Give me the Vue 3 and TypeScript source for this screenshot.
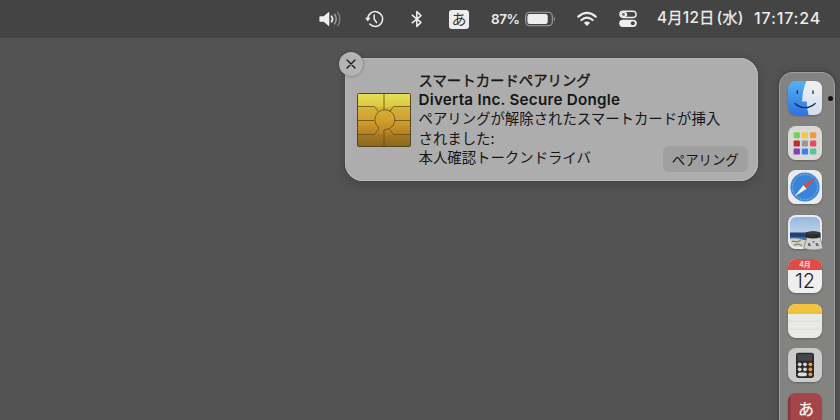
<script setup lang="ts">
const notice = {
  title: 'スマートカードペアリング',
  device: 'Diverta Inc. Secure Dongle',
  lines: ['ペアリングが解除されたスマートカードが挿入', 'されました:', '本人確認トークンドライバ'],
  action: 'ペアリング',
}

const launchpadTiles: string[] = [
  '#79cf55', '#f4c742', '#ef9b3b',
  '#c52d2b', '#96989d', '#ec4861',
  '#8340b9', '#3483e8', '#54c79a',
]
const tilePos = (i: number) => ({ x: 5.6 + (i % 3) * 8.2, y: 6.2 + Math.floor(i / 3) * 8.2 })
const dialTicks: number[] = Array.from({ length: 36 }, (_, i) => i * 10)
const keyRows: number[] = [16.3, 21.3, 26.3]
</script>

<template>
  <div class="desktop">
    <header class="menubar">
      <svg class="volume" width="24" height="18" viewBox="0 0 24 18">
        <path d="M1.2 6.3h3.5L9.4 2.2q.9-.6.9.5v12.6q0 1.1-.9.5l-4.7-4.1H1.2q-.8 0-.8-.8V7.1q0-.8.8-.8z" fill="#ededed" />
        <path d="M12.6 6.2q2 2.8 0 5.6" class="line" stroke-width="1.7" />
        <path d="M15.6 4.3q3.2 4.7 0 9.4" class="line" stroke-width="1.6" opacity=".5" />
        <path d="M18.7 2.4q4.4 6.6 0 13.2" class="line" stroke-width="1.6" opacity=".32" />
      </svg>
      <svg class="clock" width="19" height="18" viewBox="0 0 19 18">
        <path d="M2.8 9a7.4 7.4 0 1 1 2 5.1" class="line" stroke-width="1.5" />
        <path d="M0 7.8h5.5L2.8 11.5z" fill="#ededed" />
        <path d="M9.2 4.9v4.4l2.4 3.2" class="line" stroke-width="1.5" />
      </svg>
      <svg class="bluetooth" width="12" height="18" viewBox="0 0 12 18">
        <path d="M1.2 5.2l8.8 7.2-4.2 4V1.6l4.2 4-8.8 7.2" class="line" stroke-width="1.5" />
      </svg>
      <span class="input-source">あ</span>
      <span class="percent">87%</span>
      <svg class="battery" width="31" height="16" viewBox="0 0 31 16">
        <rect x=".7" y="1.2" width="26.6" height="13.6" rx="4" fill="none" stroke="#a1a1a1" stroke-width="1.1" />
        <rect x="2.4" y="2.9" width="20.3" height="10.2" rx="2.3" fill="#eee" />
        <path d="M28.8 5.6q2.6 2.4 0 4.8z" fill="#999" />
      </svg>
      <svg class="wifi" width="20" height="16" viewBox="0 0 20 16">
        <path d="M1.3 5.7q8.7-7.6 17.4 0M4.4 9q5.6-4.7 11.2 0" class="line" stroke-width="2.2" />
        <path d="M6.9 11.7q3.1-2.6 6.2 0L10 14.9z" fill="#eee" />
      </svg>
      <svg class="control" width="18" height="18" viewBox="0 0 18 18">
        <rect x=".9" y="1.3" width="16.2" height="6.2" rx="3.1" class="line" stroke-width="1.4" />
        <rect x="1.5" y="1.9" width="6.7" height="5" rx="2.5" fill="#eee" />
        <circle cx="4.5" cy="4.4" r="1.4" fill="#666" />
        <rect x=".2" y="9.7" width="17.6" height="7.3" rx="3.65" fill="#eee" />
        <circle cx="13.8" cy="13.3" r="2" fill="#444" />
      </svg>
      <span class="date">4<i>月</i>12<i>日</i><span class="paren">(</span><i>水</i><span>)</span></span>
      <span class="time">17:17:24</span>
    </header>

    <main class="stage">
      <section class="notice">
        <button class="close" aria-label="閉じる">
          <svg width="12" height="12" viewBox="0 0 12 12">
            <path d="M2 2l8 8M10 2l-8 8" stroke="#151515" stroke-width="1.3" stroke-linecap="round" />
          </svg>
        </button>
        <svg class="chip" width="54" height="54" viewBox="0 0 54 54">
          <defs>
            <linearGradient id="gold" x1="0" y1="0" x2="0" y2="1">
              <stop offset="0" stop-color="#e5df57" />
              <stop offset=".24" stop-color="#ddc842" />
              <stop offset=".27" stop-color="#d3b339" />
              <stop offset=".5" stop-color="#d0a02f" />
              <stop offset=".75" stop-color="#b88324" />
              <stop offset=".78" stop-color="#a8781f" />
              <stop offset="1" stop-color="#88681d" />
            </linearGradient>
          </defs>
          <rect x=".5" y=".5" width="53" height="53" rx="1" fill="url(#gold)" stroke="#55471b" />
          <g fill="none" stroke="#614e1c" stroke-width=".8">
            <path d="M27 1v16M1 13.5h16.5l3.7 5.2M53 13.5H36.5l-3.7 5.2M1 27.5h16M37 27.5h16M1 41.5h16.5l4-5M53 41.5H36.5l-4-5" />
            <path d="M21.5 36.5v-2.2A10 10 0 1 1 32.5 35.5L27 37v16" />
          </g>
        </svg>
        <div class="message">
          <h1>{{ notice.title }}</h1>
          <h2>{{ notice.device }}</h2>
          <p v-for="line in notice.lines" :key="line">{{ line }}</p>
        </div>
        <button class="pair">{{ notice.action }}</button>
      </section>

      <nav class="dock">
        <div class="app">
          <svg viewBox="0 0 34 34">
            <defs>
              <linearGradient id="finder" x1="0" y1="0" x2="0" y2="1">
                <stop offset="0" stop-color="#56b2ef" /><stop offset="1" stop-color="#2e73e4" />
              </linearGradient>
              <linearGradient id="face" x1="0" y1="0" x2="0" y2="1">
                <stop offset="0" stop-color="#f0f0f3" /><stop offset="1" stop-color="#d3dff0" />
              </linearGradient>
            </defs>
            <rect width="34" height="34" rx="8" fill="url(#finder)" />
            <path d="M18.5 0H26q8 0 8 8v18q0 8-8 8h-5.3q-1.9-6-1.9-13.5h-4.6Q14.5 8 18.5 0z" fill="url(#face)" />
            <path d="M9.3 9.8v2.6M25 9.8v2.6" stroke="#162c47" stroke-width="1.3" stroke-linecap="round" />
            <path d="M7 22.5q10 8.5 20.2 0" fill="none" stroke="#152a45" stroke-width="1.2" stroke-linecap="round" />
          </svg>
          <span class="running"></span>
        </div>
        <div class="app">
          <svg viewBox="0 0 34 34">
            <rect width="34" height="34" rx="8" fill="#d9d9d8" />
            <rect v-for="(c, i) in launchpadTiles" :key="i" :x="tilePos(i).x" :y="tilePos(i).y" width="6.3" height="6" rx="1.2" :fill="c" />
          </svg>
        </div>
        <div class="app">
          <svg viewBox="0 0 34 34">
            <rect width="34" height="34" rx="8" fill="#ececee" />
            <circle cx="17" cy="17" r="14.6" fill="#3a84d8" />
            <path v-for="t in dialTicks" :key="t" d="M17 3.6v1.5" :transform="`rotate(${t} 17 17)`" stroke="#a9cdf2" stroke-width=".6" />
            <path d="M27.5 7.5L15.3 15.3l3.4 3.4z" fill="#dc4740" />
            <path d="M6.5 26.5l8.8-11.2 3.4 3.4z" fill="#f2f2f2" />
          </svg>
        </div>
        <div class="app">
          <svg viewBox="0 0 34 34">
            <defs>
              <linearGradient id="sky" x1="0" y1="0" x2="0" y2="1">
                <stop offset="0" stop-color="#91b4e1" /><stop offset="1" stop-color="#bdd1e7" />
              </linearGradient>
              <clipPath id="photo"><rect x="2" y="2" width="30" height="30" rx="6" /></clipPath>
            </defs>
            <rect width="34" height="34" rx="8" fill="#ececee" />
            <g clip-path="url(#photo)">
              <path fill="url(#sky)" d="M0 0h34v18H0z" />
              <path fill="#263f78" d="M0 17.5h34V24H0z" />
              <path fill="#426f98" d="M0 22h34v3H0z" />
              <path fill="#d6d0c3" d="M0 24q8-2 16 1h18v9H0z" />
              <path d="M4 26l5 1 4-2M6 30l5-1 3 2" fill="none" stroke="#69716e" stroke-width="1" />
            </g>
            <path d="M19 22h13l3 11.4q-9 3.2-19.3 0z" fill="#cfd0cf" stroke="#747675" stroke-width=".7" />
            <path d="M17.6 18q7.5-3.4 15 0v4.2q-7.5 2.7-15 0z" fill="#292b2c" />
            <ellipse cx="25.1" cy="18" rx="7.3" ry="1.6" fill="#3a3c3d" />
            <path d="M20 28h2l1 3h-3zM24.5 26h2v1.5h-2zM27.5 28h2.3l1.2 3h-3z" fill="#6b6e6d" />
          </svg>
        </div>
        <div class="app calendar">
          <span class="month">4月</span>
          <span class="day">12</span>
        </div>
        <div class="app">
          <svg viewBox="0 0 34 34">
            <rect width="34" height="34" rx="8" fill="#e9e9e6" />
            <path d="M0 9V8q0-8 8-8h18q8 0 8 8v1z" fill="#f0c53d" />
            <path d="M0 9.3h34" stroke="#b9a265" stroke-width=".7" />
            <path d="M1 17.2h32M1 25.2h32" stroke="#d2d2d0" stroke-width=".7" />
          </svg>
        </div>
        <div class="app">
          <svg viewBox="0 0 34 34">
            <rect width="34" height="34" rx="8" fill="#cbcccc" />
            <rect x="8" y="4.7" width="18" height="25.3" rx="2.4" fill="#292a2c" />
            <rect x="9.6" y="6.3" width="14.8" height="6.5" rx="1" fill="#44474a" />
            <g v-for="(y, i) in keyRows" :key="y">
              <circle v-if="i < 2" cx="11.7" :cy="y" r="1.9" fill="#d7d8d8" />
              <circle v-if="i < 2" cx="17" :cy="y" r="1.9" fill="#d7d8d8" />
              <rect v-else x="9.8" :y="y - 1.9" width="9.1" height="3.8" rx="1.9" fill="#dedfdf" />
              <circle cx="22.4" :cy="y" r="1.9" fill="#f09a37" />
            </g>
          </svg>
        </div>
        <div class="app dictionary">あ</div>
      </nav>
    </main>
  </div>
</template>

<style>
body {
  overflow: hidden;
}
</style>

<style scoped>
.desktop {
  width: 840px;
  height: 420px;
  overflow: hidden;
  display: flex;
  flex-direction: column;
  background: #535353;
  font-family: Inter, "Noto Sans CJK JP", sans-serif;
}
.menubar {
  height: 38px;
  flex: none;
  box-sizing: border-box;
  display: flex;
  align-items: center;
  padding-left: 319px;
  background: #444;
  color: #ededed;
  white-space: nowrap;
}
.menubar > * { flex: none; }
.line {
  fill: none;
  stroke: #ededed;
  stroke-linecap: round;
  stroke-linejoin: round;
}
.clock { margin-left: 22px; }
.bluetooth { margin-left: 26.5px; }
.input-source {
  width: 20px;
  height: 19px;
  margin-left: 26.5px;
  border-radius: 3px;
  background: #ededed;
  color: #333;
  font: 400 15px/18px "Noto Sans CJK JP", sans-serif;
  text-align: center;
}
.percent {
  width: 34px;
  margin-left: 22px;
  font-size: 13.4px;
  font-weight: 600;
  letter-spacing: -0.4px;
}
.wifi { margin-left: 21px; }
.control { margin-left: 22px; }
.date {
  width: 97px;
  margin-left: 20px;
  font-size: 15.4px;
  line-height: 20px;
  font-weight: 500;
  letter-spacing: 0.3px;
}
.date i {
  font-style: normal;
  font-weight: 400;
  font-size: 15px;
  -webkit-text-stroke: 0.3px #ededed;
}
.paren { margin-left: 2px; }
.time {
  font-size: 16px;
  line-height: 20px;
  font-weight: 500;
  letter-spacing: 0.85px;
}
.date, .time {
  position: relative;
  top: -1px;
}
.stage {
  flex: 1;
  min-height: 0;
  display: flex;
  align-items: flex-start;
  padding-left: 345px;
}
button {
  border: 0;
  padding: 0;
  font-family: inherit;
}
.notice {
  position: relative;
  flex: none;
  box-sizing: border-box;
  width: 413px;
  height: 123px;
  margin-top: 20px;
  padding: 12px 9px 9px 11.5px;
  display: flex;
  border-radius: 18px;
  background: #adadad;
  box-shadow: 0 0 0 1px #484848, inset 0 0 0 1px #b9b9b9, 0 3px 12px #0003;
  color: #151515;
}
.close {
  position: absolute;
  left: -6px;
  top: -6px;
  width: 24px;
  height: 24px;
  display: grid;
  place-items: center;
  border-radius: 50%;
  background: #b4b4b4;
  box-shadow: 0 0 3px #0006;
}
.chip {
  flex: none;
  margin-top: 22.5px;
}
.message {
  flex: none;
  width: 244px;
  margin-left: 8px;
  white-space: nowrap;
}
.message > * {
  height: 19.2px;
  margin: 0;
  font-size: 14.4px;
  line-height: 19.2px;
  font-weight: 400;
}
.message p, .message h1 {
  font-family: "Noto Sans CJK JP", sans-serif;
}
.message h1 { -webkit-text-stroke: 0.35px #151515; }
.message h2 {
  font-size: 15.2px;
  font-weight: 600;
  line-height: 21px;
  letter-spacing: 0.26px;
}
.pair {
  flex: none;
  align-self: flex-end;
  width: 85.5px;
  height: 26px;
  border-radius: 6px;
  background: #a0a0a0;
  color: #151515;
  font: 400 13.4px/25px "Noto Sans CJK JP", sans-serif;
}
.dock {
  flex: none;
  box-sizing: border-box;
  width: 56px;
  height: 400px;
  margin: 34px 0 0 21px;
  padding: 8px 0 0 8px;
  display: flex;
  flex-direction: column;
  gap: 10.5px;
  border: 1px solid #a0a0a0;
  border-radius: 13px;
  background: #838482;
  box-shadow: 0 0 0 1px #444, 0 0 10px #0003;
}
.app {
  position: relative;
  flex: none;
  width: 34px;
  height: 34px;
  border-radius: 8px;
  box-shadow: 0 1px 2px #0004;
}
.app svg {
  display: block;
  width: 34px;
  height: 34px;
  overflow: visible;
}
.running {
  position: absolute;
  left: 39.5px;
  top: 14.5px;
  width: 5px;
  height: 5px;
  border-radius: 50%;
  background: #111;
}
.calendar {
  overflow: hidden;
  display: flex;
  flex-direction: column;
  text-align: center;
  background: #efefef;
}
.month {
  height: 11px;
  background: #df4b46;
  color: #f5e4e2;
  font-size: 7px;
  font-weight: 600;
  line-height: 11px;
}
.day {
  color: #222;
  font-size: 20px;
  font-weight: 300;
  line-height: 22px;
}
.dictionary {
  background: linear-gradient(90deg, #86383a 0 2px, #a64549 3px);
  color: #eee;
  font: 500 16px/31px "Noto Sans CJK JP", serif;
  text-align: center;
  text-indent: 2px;
}
</style>
